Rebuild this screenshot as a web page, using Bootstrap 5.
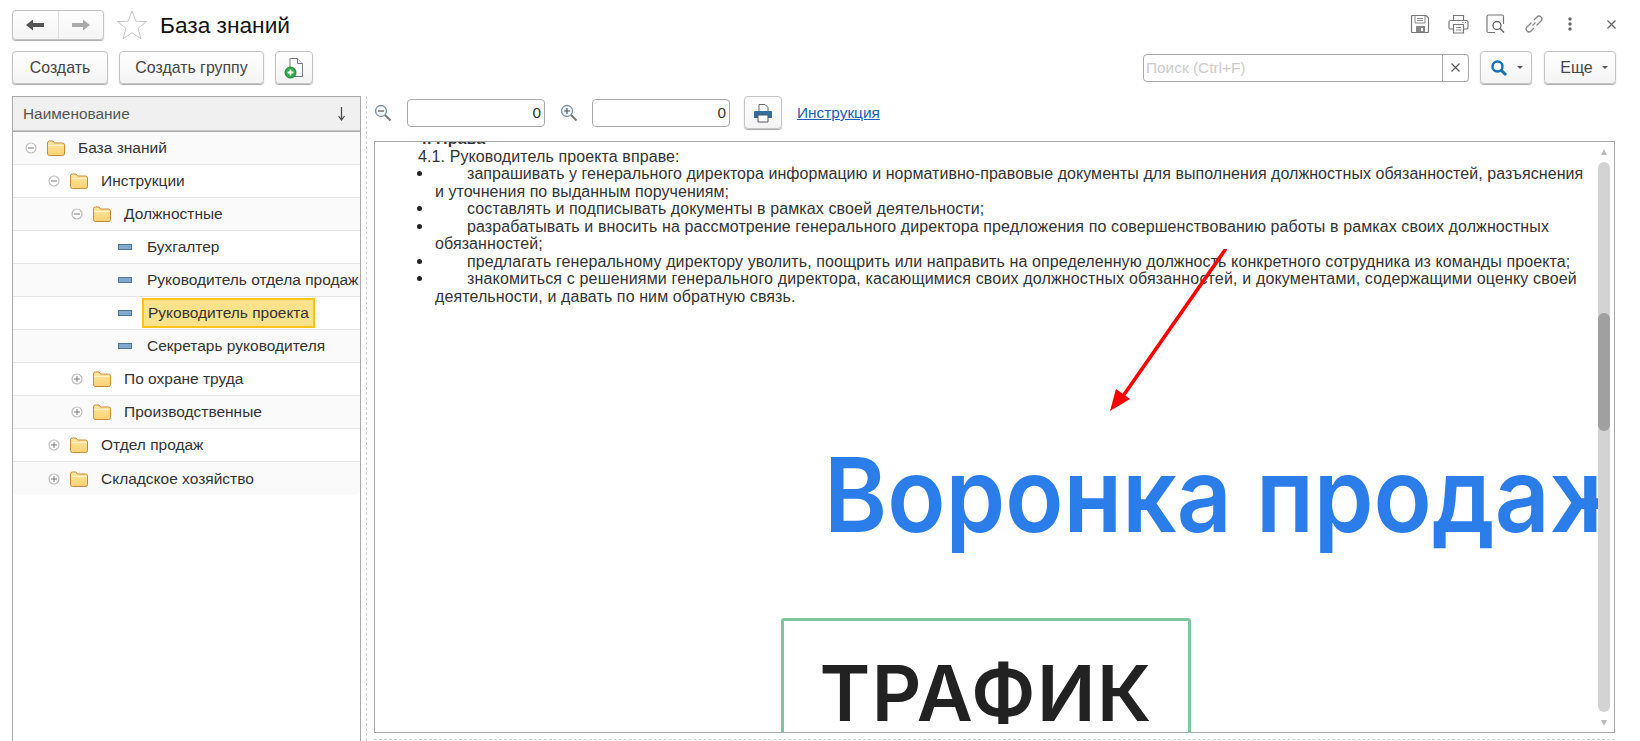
<!DOCTYPE html>
<html lang="ru">
<head>
<meta charset="utf-8">
<title>База знаний</title>
<link href="https://cdn.jsdelivr.net/npm/bootstrap@5.3.0/dist/css/bootstrap.min.css" rel="stylesheet">
<style>
html,body{height:741px;overflow:hidden}
body{font-family:"Liberation Sans",Arial,sans-serif;font-size:15.4px;color:#333;background:#fff;width:1640px}
.skin-btn{font-size:15.9px;color:#444;height:33px;padding:0;border:1px solid #c4c4c4;border-radius:4px;background:linear-gradient(#fff,#f4f4f4);box-shadow:0 1px 1px #aaa;display:inline-flex;align-items:center;justify-content:center}
.top-bar{height:46px;padding:10px 24px 0 12px}
.nav-grp{width:92px;height:30px;border:1px solid #c4c4c4;border-radius:4px;background:linear-gradient(#fff,#f4f4f4);box-shadow:0 1px 1px #aaa}
.nav-grp>span{flex:1;display:flex;align-items:center;justify-content:center;height:100%}
.nav-grp>span:first-child{border-right:1px solid #ddd}
.star-ic{margin:0 13px 0 13px}
.page-title{font-size:22.7px;color:#111;margin:0;line-height:30px;font-weight:400}
.tool-ic{display:flex;margin-top:4px}
.ic-save{margin-right:18px}.ic-print{margin-right:17px}.ic-prev{margin-right:18px}.ic-link{margin-right:24px}.ic-dots{margin-right:35px}
.tool-row{height:33px;margin-top:5px;padding:0 24px 0 12px}
.w-create{width:96px;margin-right:11px}.w-group{width:145px;margin-right:11px}.w-add{width:38px}
.search-box{width:326px;height:28px;margin-right:11px}
.search-box .form-control{height:28px;border-radius:4px 0 0 4px;border-color:#aaa;padding:0 2px;font-size:15.4px;box-shadow:none}
.search-box .form-control::placeholder{color:#ccc}
.clear-x{width:27px;border:1px solid #aaa;border-left-color:#999;margin-left:-1px;border-radius:0 4px 4px 0;color:#555;display:flex;align-items:center;justify-content:center}
.w-find{width:52px;margin-right:12px}.w-more{width:72px;padding-left:8px}
.caret-dn{width:0;height:0;border:3px solid transparent;border-top:3px solid #555;border-bottom:0;margin-left:9px}
.work{height:645px;margin-top:12px;padding-left:12px}
.left-pane{width:349px;border:1px solid #a8a8a8;border-bottom:0;border-radius:0}
.col-head{height:34px;background:#f0f0f0;border-bottom:1px solid #c8c8c8;padding:0 14px 0 10px;color:#555}
.tree-row{height:33px;border:0;border-bottom:1px solid #e4e4e4;border-radius:0;padding:0;white-space:nowrap;overflow:hidden;color:#333;font-size:15.5px;position:static;background:#fff}
.tree-row:nth-child(odd){background:#fafafa}
.ind-0{padding-left:12px}.ind-1{padding-left:35px}.ind-2{padding-left:58px}.ind-3{padding-left:105px}
.exp-ic{margin-right:10px}.fold-ic{margin-right:13px}.dash-ic{margin-right:10px}
.sel-cell{background:#fde28b;border:2px solid #fcc419;height:30px;padding:0 4px;display:flex;align-items:center}
.plain-cell{padding-left:5px}
.splitter{width:0;margin:0 7px 0 5px;border-left:1px dashed #ccc}
.right-pane{width:1241px}
.doc-tools{height:33px}
.zoom-ic{margin-right:15px;display:flex}
.val-box{width:138px;height:28px;border:1px solid #aaa;border-radius:4px;padding:0 3px;text-align:right;font-size:15.4px;color:#333;box-shadow:none;margin-right:15px}
.val-box+.zoom-ic{margin-right:14px}
.val-box+.zoom-ic+.val-box{margin-right:14px}
.w-print{width:38px;margin:0 15px 0 0}
.help-link{color:#1a5fb4;font-size:15.4px}
.doc-frame{height:592px;margin-top:12px;border:1px solid #a8a8a8;background:#fff;position:relative;overflow:hidden}
.doc-body{flex:1;overflow:hidden;min-width:0}
.doc-text{margin-top:-12px;padding-left:43px;line-height:17.5px;font-size:16px;letter-spacing:.1px;color:#333;white-space:nowrap}
.doc-text .h-right{font-weight:700}
.ls-tight{letter-spacing:.05px}.ls-wide{letter-spacing:.16px}
.bul-line{display:block;padding-left:17px;text-indent:32px;position:relative}
.bul-line::before{content:"";position:absolute;left:-1px;top:6px;width:5px;height:5px;border-radius:50%;background:#222}
.wrap-line{display:block;padding-left:17px}
.funnel-title{font-family:Inter,"Liberation Sans",sans-serif;font-weight:600;font-size:103px;line-height:100px;color:#2b7de9;margin:140px 0 0 449px;white-space:nowrap;transform:scaleX(.93);transform-origin:0 50%}
.traffic-box{width:410px;height:200px;margin:73px 0 0 406px;border:3.5px solid #7cc79f;border-radius:3px;padding-top:37px;text-align:center;font-family:Inter,"Liberation Sans",sans-serif;font-weight:600;font-size:77px;line-height:70px;letter-spacing:1.5px;color:#222}
.scroll-col{width:14px;margin-right:2px;position:relative}
.scroll-track{position:absolute;left:0;right:2px;top:20px;bottom:20px;background:#d3d3d3;border-radius:6px}
.scroll-thumb{position:absolute;left:0;right:0;top:151px;height:118px;background:#a0a0a0;border-radius:6px}
.arr-up,.arr-dn{position:absolute;left:3px;width:0;height:0;border:3px solid transparent}
.arr-up{top:7px;border-bottom:6px solid #bbb;border-top:0}
.arr-dn{bottom:6px;border-top:6px solid #bbb;border-bottom:0}
.red-arrow{position:absolute;left:734px;top:107px}
.dash-foot{height:0;margin-top:6px;border-top:1px dashed #ccc;width:1241px}
</style>
</head>
<body>
<svg width="0" height="0" class="position-absolute">
  <defs>
    <linearGradient id="fg" x1="0" y1="0" x2="0" y2="1"><stop offset="0" stop-color="#fde7a2"/><stop offset="1" stop-color="#fad272"/></linearGradient>
    <symbol id="folder" viewBox="0 0 18 16"><path d="M.5 3Q.5 1 2.5 1H6l1.5 2H15.5Q17.5 3 17.5 5V13.5Q17.5 15.5 15.5 15.5H2.5Q.5 15.5 .5 13.5Z" fill="url(#fg)" stroke="#c98a3c"/><path d="M1 5.5H17" stroke="#fff3c8"/></symbol>
    <symbol id="minus" viewBox="0 0 12 12"><circle cx="6" cy="6" r="5" fill="#fff" stroke="#bdbdbd" stroke-width="1.2"/><path d="M3 6H9" stroke="#777"/></symbol>
    <symbol id="plus" viewBox="0 0 12 12"><circle cx="6" cy="6" r="5" fill="#fff" stroke="#bdbdbd" stroke-width="1.2"/><path d="M3 6H9M6 3V9" stroke="#777"/></symbol>
    <symbol id="dash" viewBox="0 0 14 6"><rect x=".5" y=".5" width="13" height="5" fill="#7fa9d0" stroke="#4f7698"/></symbol>
  </defs>
</svg>

<header class="top-bar d-flex align-items-start">
  <div class="nav-grp d-flex">
    <span><svg width="20" height="14" viewBox="0 0 20 14"><path d="M1 7L8 1.5V5H19V9H8V12.5Z" fill="#555"/></svg></span>
    <span><svg width="20" height="14" viewBox="0 0 20 14"><path d="M19 7L12 1.5V5H1V9H12V12.5Z" fill="#aaa"/></svg></span>
  </div>
  <svg class="star-ic" width="30" height="30" viewBox="0 0 30 30"><path d="M15 1L18.8 11.2 29.5 11.6 21.1 18.3 24 28.8 15 22.8 6 28.8 8.9 18.3.5 11.6 11.2 11.2Z" fill="#fff" stroke="#c8c8c8"/></svg>
  <h1 class="page-title">База знаний</h1>
  <div class="ms-auto d-flex align-items-center">
    <svg class="tool-ic ic-save" width="20" height="20" viewBox="0 0 20 20"><path d="M2.5 1.5H16L18.5 4V17.5Q18.5 18.5 17.5 18.5H2.5Q1.5 18.5 1.5 17.5V2.5Q1.5 1.5 2.5 1.5Z" fill="none" stroke="#777" stroke-width="1.2"/><path d="M5 2V9H15V2M7 4.5H13M7 6.5H13" fill="none" stroke="#888"/><path d="M6 12H15V18H6Z" fill="#888"/><path d="M11 14H13V17H11Z" fill="#fff"/></svg>
    <svg class="tool-ic ic-print" width="21" height="20" viewBox="0 0 21 20"><path d="M5.5 6V1.5H15.5V6M5 15H2.5Q1 15 1 13.5V8Q1 6.5 2.5 6.5H18.5Q20 6.5 20 8V13.5Q20 15 18.5 15H16" fill="none" stroke="#777" stroke-width="1.2"/><path d="M5.5 10.5H15.5V19H5.5Z" fill="#fff" stroke="#777" stroke-width="1.2"/><path d="M8 13.5H13M8 16H13" stroke="#888"/><path d="M14 8.5H15.5M17 8.5H18" stroke="#888"/></svg>
    <svg class="tool-ic ic-prev" width="20" height="20" viewBox="0 0 20 20"><path d="M9 18.5H2.5Q1 18.5 1 17V2.5Q1 1 2.5 1H16Q17.5 1 17.5 2.5V10" fill="none" stroke="#777" stroke-width="1.2"/><circle cx="11" cy="11.5" r="4" fill="none" stroke="#666" stroke-width="1.3"/><path d="M14 14.5L18 18.5" stroke="#666" stroke-width="1.6"/></svg>
    <svg class="tool-ic ic-link" width="20" height="20" viewBox="0 0 20 20"><path d="M8.5 11.5L11.5 8.5M7.5 8.5L3 13Q1 15 3 17T7 17L10 14M12.5 11.5L17 7Q19 5 17 3T13 3L10 6" fill="none" stroke="#888" stroke-width="1.3"/></svg>
    <svg class="tool-ic ic-dots" width="4" height="14" viewBox="0 0 4 14"><circle cx="2" cy="2" r="1.7" fill="#666"/><circle cx="2" cy="7" r="1.7" fill="#666"/><circle cx="2" cy="12" r="1.7" fill="#666"/></svg>
    <svg class="tool-ic" width="9" height="9" viewBox="0 0 9 9"><path d="M.5 .5L8.5 8.5M8.5 .5L.5 8.5" stroke="#666" stroke-width="1.3"/></svg>
  </div>
</header>

<div class="tool-row d-flex align-items-center">
  <button class="btn skin-btn w-create">Создать</button>
  <button class="btn skin-btn w-group">Создать группу</button>
  <button class="btn skin-btn w-add" aria-label="Создать из файла">
    <svg width="20" height="22" viewBox="0 0 20 22"><path d="M6 1.5H13.5L18.5 6.5V19.5H6Z" fill="#fff" stroke="#778"/><path d="M13.5 1.5V6.5H18.5" fill="#eef" stroke="#778"/><circle cx="6.5" cy="15.5" r="5.5" fill="#2eaa4a" stroke="#1d7f34"/><path d="M3.5 15.5H9.5M6.5 12.5V18.5" stroke="#fff" stroke-width="1.8"/></svg>
  </button>
  <div class="input-group search-box ms-auto flex-nowrap">
    <input class="form-control" placeholder="Поиск (Ctrl+F)" aria-label="Поиск">
    <span class="clear-x"><svg width="9" height="9" viewBox="0 0 9 9"><path d="M.5 .5L8.5 8.5M8.5 .5L.5 8.5" stroke="#555" stroke-width="1.1"/></svg></span>
  </div>
  <button class="btn skin-btn w-find" aria-label="Найти"><svg width="18" height="18" viewBox="0 0 18 18"><circle cx="7.5" cy="7.5" r="5" fill="none" stroke="#1a6fb0" stroke-width="2.4"/><path d="M11 11L16 16" stroke="#1a6fb0" stroke-width="3"/></svg><span class="caret-dn"></span></button>
  <button class="btn skin-btn w-more">Еще<span class="caret-dn"></span></button>
</div>

<main class="work d-flex">
  <section class="card left-pane">
    <div class="col-head d-flex align-items-center justify-content-between"><span>Наименование</span>
      <svg width="9" height="15" viewBox="0 0 9 15"><path d="M4.5 1V13M1.5 10L4.5 14 7.5 10" fill="none" stroke="#444" stroke-width="1.2"/></svg></div>
    <div class="list-group list-group-flush">
      <div class="list-group-item tree-row ind-0 d-flex align-items-center"><svg class="exp-ic" width="12" height="12"><use href="#minus"/></svg><svg class="fold-ic" width="18" height="16"><use href="#folder"/></svg><span class="tree-txt">База знаний</span></div>
      <div class="list-group-item tree-row ind-1 d-flex align-items-center"><svg class="exp-ic" width="12" height="12"><use href="#minus"/></svg><svg class="fold-ic" width="18" height="16"><use href="#folder"/></svg><span class="tree-txt">Инструкции</span></div>
      <div class="list-group-item tree-row ind-2 d-flex align-items-center"><svg class="exp-ic" width="12" height="12"><use href="#minus"/></svg><svg class="fold-ic" width="18" height="16"><use href="#folder"/></svg><span class="tree-txt">Должностные</span></div>
      <div class="list-group-item tree-row ind-3 d-flex align-items-center"><svg class="dash-ic" width="14" height="6"><use href="#dash"/></svg><span class="plain-cell">Бухгалтер</span></div>
      <div class="list-group-item tree-row ind-3 d-flex align-items-center"><svg class="dash-ic" width="14" height="6"><use href="#dash"/></svg><span class="plain-cell">Руководитель отдела продаж</span></div>
      <div class="list-group-item tree-row ind-3 d-flex align-items-center"><svg class="dash-ic" width="14" height="6"><use href="#dash"/></svg><span class="sel-cell">Руководитель проекта</span></div>
      <div class="list-group-item tree-row ind-3 d-flex align-items-center"><svg class="dash-ic" width="14" height="6"><use href="#dash"/></svg><span class="plain-cell">Секретарь руководителя</span></div>
      <div class="list-group-item tree-row ind-2 d-flex align-items-center"><svg class="exp-ic" width="12" height="12"><use href="#plus"/></svg><svg class="fold-ic" width="18" height="16"><use href="#folder"/></svg><span class="tree-txt">По охране труда</span></div>
      <div class="list-group-item tree-row ind-2 d-flex align-items-center"><svg class="exp-ic" width="12" height="12"><use href="#plus"/></svg><svg class="fold-ic" width="18" height="16"><use href="#folder"/></svg><span class="tree-txt">Производственные</span></div>
      <div class="list-group-item tree-row ind-1 d-flex align-items-center"><svg class="exp-ic" width="12" height="12"><use href="#plus"/></svg><svg class="fold-ic" width="18" height="16"><use href="#folder"/></svg><span class="tree-txt">Отдел продаж</span></div>
      <div class="list-group-item tree-row ind-1 d-flex align-items-center"><svg class="exp-ic" width="12" height="12"><use href="#plus"/></svg><svg class="fold-ic" width="18" height="16"><use href="#folder"/></svg><span class="tree-txt">Складское хозяйство</span></div>
    </div>
  </section>
  <div class="splitter"></div>
  <section class="right-pane">
    <div class="doc-tools d-flex align-items-center">
      <span class="zoom-ic"><svg width="18" height="18" viewBox="0 0 18 18"><circle cx="7" cy="7" r="5.5" fill="#f4f7f9" stroke="#7d93a3" stroke-width="1.3"/><path d="M4 7H10" stroke="#555" stroke-width="1.2"/><path d="M11 11L16.5 16.5" stroke="#777" stroke-width="2"/></svg></span>
      <input class="form-control val-box" value="0" aria-label="Масштаб">
      <span class="zoom-ic"><svg width="18" height="18" viewBox="0 0 18 18"><circle cx="7" cy="7" r="5.5" fill="#f4f7f9" stroke="#7d93a3" stroke-width="1.3"/><path d="M4 7H10M7 4V10" stroke="#555" stroke-width="1.2"/><path d="M11 11L16.5 16.5" stroke="#777" stroke-width="2"/></svg></span>
      <input class="form-control val-box" value="0" aria-label="Страница">
      <button class="btn skin-btn w-print" aria-label="Печать"><svg width="20" height="20" viewBox="0 0 20 20"><path d="M6 8V1.5H12L15 4.5V8" fill="#fff" stroke="#667"/><path d="M2 8H18Q19 8 19 9V15H1V9Q1 8 2 8Z" fill="#2f6e9e"/><path d="M5 12H15V19H5Z" fill="#fff" stroke="#556"/></svg></button>
      <a href="#" class="help-link">Инструкция</a>
    </div>
    <div class="doc-frame d-flex">
      <div class="doc-body">
        <div class="doc-text">
          <div class="h-right">4. Права</div>
          <div>4.1. Руководитель проекта вправе:</div>
          <span class="bul-line ls-tight">запрашивать у генерального директора информацию и нормативно-правовые документы для выполнения должностных обязанностей, разъяснения</span>
          <span class="wrap-line ls-tight">и уточнения по выданным поручениям;</span>
          <span class="bul-line">составлять и подписывать документы в рамках своей деятельности;</span>
          <span class="bul-line">разрабатывать и вносить на рассмотрение генерального директора предложения по совершенствованию работы в рамках своих должностных</span>
          <span class="wrap-line">обязанностей;</span>
          <span class="bul-line">предлагать генеральному директору уволить, поощрить или направить на определенную должность конкретного сотрудника из команды проекта;</span>
          <span class="bul-line ls-wide">знакомиться с решениями генерального директора, касающимися своих должностных обязанностей, и документами, содержащими оценку своей</span>
          <span class="wrap-line">деятельности, и давать по ним обратную связь.</span>
        </div>
        <div class="funnel-title">Воронка продаж</div>
        <div class="traffic-box">ТРАФИК</div>
      </div>
      <div class="scroll-col"><i class="arr-up"></i><div class="scroll-track"><div class="scroll-thumb"></div></div><i class="arr-dn"></i></div>
      <svg class="red-arrow" width="125" height="165" viewBox="0 0 125 165"><path d="M116 1L12 150" stroke="#f00" stroke-width="3.6" fill="none" stroke-linecap="round"/><path d="M1 162L7 140 21 150Z" fill="#f00"/></svg>
    </div>
    <div class="dash-foot"></div>
  </section>
</main>
<script src="https://cdn.jsdelivr.net/npm/bootstrap@5.3.0/dist/js/bootstrap.bundle.min.js"></script>
</body>
</html>
